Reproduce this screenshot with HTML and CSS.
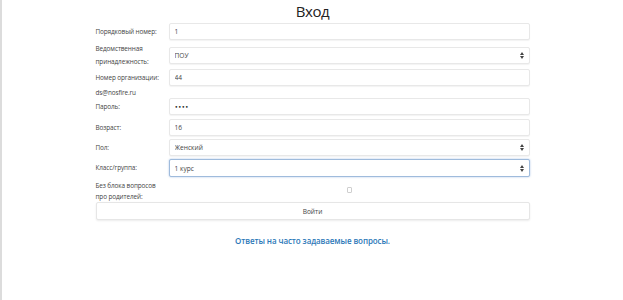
FILE: index.html
```html
<!DOCTYPE html>
<html lang="ru">

<head>
    <meta charset="utf-8">
    <meta name="viewport" content="width=device-width, initial-scale=1.0">
    <title>Вход</title>
    <link rel="stylesheet" href="styles.css">
</head>

<body>
    <div class="stranica">
        <h1>Вход</h1>
        <form class="vhod">
            <div class="ryad">
                <label>Порядковый номер:</label>
                <input class="pole" type="text" value="1">
            </div>
            <div class="ryad dvojnoj">
                <label>Ведомственная принадлежность:</label>
                <div class="vybor">
                    <select class="pole">
                        <option>ПОУ</option>
                    </select>
                    <svg class="strelki" width="4" height="7" viewBox="0 0 4 7"><path d="M0 3 L2 0 L4 3 Z M0 4 L2 7 L4 4 Z" fill="#444"/></svg>
                </div>
            </div>
            <div class="ryad">
                <label>Номер организации:</label>
                <input class="pole" type="text" value="44">
            </div>
            <div class="ryad pochta">
                <label>ds@nosfire.ru</label>
            </div>
            <div class="ryad shire">
                <label>Пароль:</label>
                <input class="pole parol" type="password" value="1234">
            </div>
            <div class="ryad">
                <label>Возраст:</label>
                <input class="pole" type="text" value="16">
            </div>
            <div class="ryad">
                <label>Пол:</label>
                <div class="vybor">
                    <select class="pole">
                        <option>Женский</option>
                    </select>
                    <svg class="strelki" width="4" height="7" viewBox="0 0 4 7"><path d="M0 3 L2 0 L4 3 Z M0 4 L2 7 L4 4 Z" fill="#444"/></svg>
                </div>
            </div>
            <div class="ryad">
                <label>Класс/группа:</label>
                <div class="vybor">
                    <select class="pole fokus">
                        <option>1 курс</option>
                    </select>
                    <svg class="strelki" width="4" height="7" viewBox="0 0 4 7"><path d="M0 3 L2 0 L4 3 Z M0 4 L2 7 L4 4 Z" fill="#444"/></svg>
                </div>
            </div>
            <div class="ryad galochka">
                <label>Без блока вопросов про родителей:</label>
                <input class="flazhok" type="checkbox">
            </div>
            <button class="knopka" type="button">Войти</button>
        </form>
        <a class="voprosy" href="#">Ответы на часто задаваемые вопросы.</a>
    </div>
</body></html>
```

FILE: styles.css
```css
* {
    box-sizing: border-box;
}

body {
    margin: 0;
    font-family: 'Open Sans', sans-serif;
    color: #333;
    background: #fff;
}

.stranica {
    min-height: 300px;
    border-left: 2px solid #dcdcdc;
    text-align: center;
}

h1 {
    margin: 0;
    font-size: 15px;
    font-weight: 400;
    line-height: 22px;
    letter-spacing: -0.4px;
    color: #222;
}

.vhod {
    width: 434px;
    margin: 1px auto 0 auto;
    text-align: left;
}

.ryad {
    display: grid;
    grid-template-columns: 73px 1fr;
    align-items: center;
    margin-bottom: 3px;
}

.ryad label {
    font-size: 6.4px;
    line-height: 12px;
    letter-spacing: -0.1px;
    color: #444;
}

.dvojnoj {
    margin-top: 0;
    margin-bottom: 1px;
}

.dvojnoj label {
    line-height: 12.5px;
}

.pochta {
    height: 9px;
    margin-top: -2px;
    margin-bottom: 2px;
}

.shire {
    margin-bottom: 4px;
}

.pole {
    width: 100%;
    height: 17px;
    padding: 0 5px;
    border: 1px solid #e8e8e8;
    border-radius: 2px;
    box-shadow: 0 1px 1px rgba(0, 0, 0, 0.05);
    background: #fff;
    font-family: 'Open Sans', sans-serif;
    font-size: 6.6px;
    color: #444;
    outline: none;
}

.parol {
    font-family: 'DejaVu Sans', sans-serif;
    font-size: 6px;
    letter-spacing: 0;
    color: #222;
}

.vybor {
    position: relative;
}

.vybor select {
    appearance: none;
    -webkit-appearance: none;
    display: block;
}

.strelki {
    position: absolute;
    right: 6px;
    top: 5px;
}

.fokus {
    height: 18px;
    border-color: #9fbbdc;
    box-shadow: 0 0 2px rgba(102, 150, 210, 0.6);
}

.fokus + .strelki {
    top: 6px;
}

.galochka {
    margin-top: 1px;
    margin-bottom: 0;
}

.galochka label {
    line-height: 11px;
}

.flazhok {
    appearance: none;
    -webkit-appearance: none;
    justify-self: center;
    width: 5px;
    height: 6px;
    margin: 0 0 2px 0;
    border: 1px solid #cfcfcf;
    border-radius: 1px;
    background: #fff;
}

.knopka {
    display: block;
    width: 100%;
    height: 18px;
    margin: 0;
    border: 1px solid #e6e6e6;
    border-radius: 2px;
    background: #fff;
    box-shadow: 0 1px 2px rgba(0, 0, 0, 0.08);
    font-family: 'Open Sans', sans-serif;
    font-size: 6.6px;
    color: #444;
    cursor: pointer;
}

.voprosy {
    display: inline-block;
    margin-top: 15px;
    font-size: 8px;
    font-weight: 600;
    letter-spacing: -0.1px;
    color: #2b78b8;
    text-decoration: none;
}
```
